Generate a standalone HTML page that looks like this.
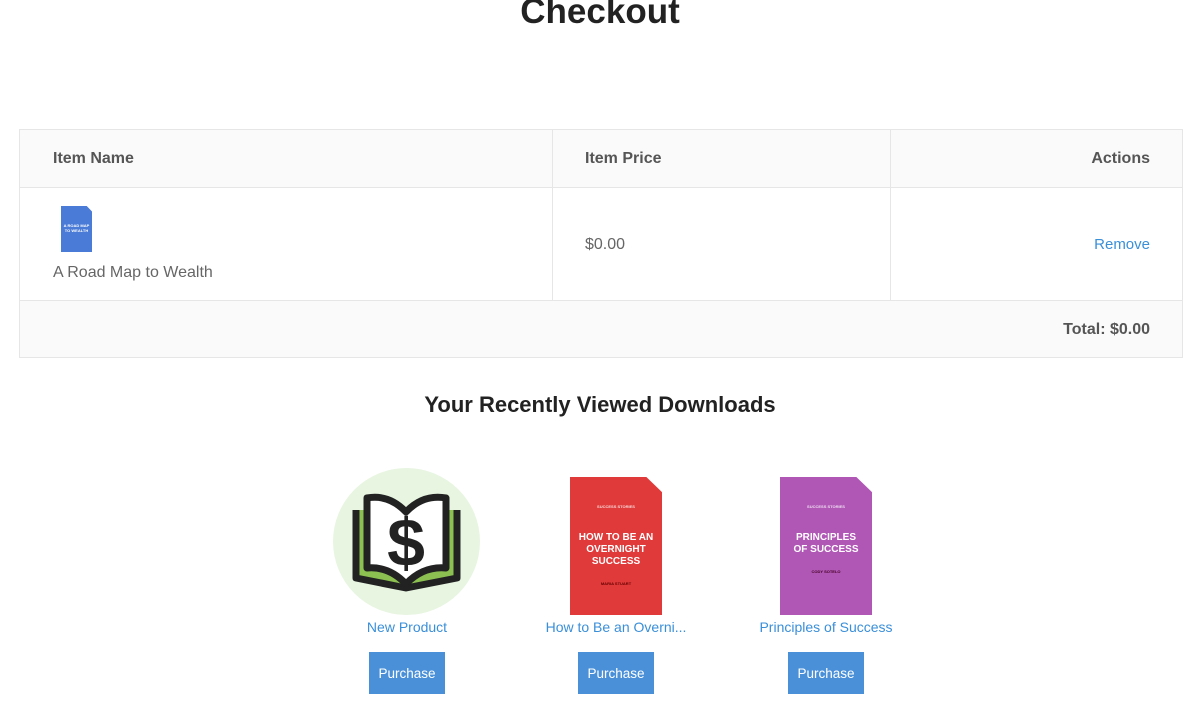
<!DOCTYPE html>
<html><head><style>
body{margin:0;width:1200px;height:705px;overflow:hidden;background:#fff;font-family:"Liberation Sans",sans-serif;position:relative}
.a{position:absolute}
h1{position:absolute;top:-13px;left:0;width:1200px;text-align:center;font-size:35px;font-weight:bold;color:#222;margin:0;line-height:50px}
.cell{position:absolute;box-sizing:border-box;border:1px solid #e6e6e6}
.th{font-weight:bold;color:#555;font-size:16px}
.td{color:#666;font-size:16px}
.lnk{color:#3a8fd9;font-size:14px;text-align:center}
.btn{background:#4a90d9;color:#fff;font-size:13.5px;text-align:center;line-height:43px;width:76px;height:42px}
.book{color:#fff;font-weight:bold;text-align:center;font-size:10px;line-height:12px}
</style></head><body>
<h1>Checkout</h1>
<div class="cell" style="left:19px;top:129px;width:534px;height:59px;background:#fafafa"></div>
<div class="cell" style="left:552px;top:129px;width:339px;height:59px;background:#fafafa"></div>
<div class="cell" style="left:890px;top:129px;width:293px;height:59px;background:#fafafa"></div>
<div class="cell" style="left:19px;top:187px;width:534px;height:114px"></div>
<div class="cell" style="left:552px;top:187px;width:339px;height:114px"></div>
<div class="cell" style="left:890px;top:187px;width:293px;height:114px"></div>
<div class="cell" style="left:19px;top:300px;width:1164px;height:58px;background:#fafafa"></div>
<div class="a th" style="left:53px;top:150px">Item Name</div>
<div class="a th" style="left:585px;top:150px">Item Price</div>
<div class="a th" style="right:50px;top:150px">Actions</div>
<div class="a" style="left:61px;top:206px;width:31px;height:46px;background:#4a7bd6;clip-path:polygon(0 0,83% 0,100% 12%,100% 100%,0 100%)"><div style="color:#fff;font-size:4px;font-weight:bold;text-align:center;margin-top:17px;line-height:5px">A ROAD MAP<br>TO WEALTH</div></div>
<div class="a td" style="left:53px;top:264px">A Road Map to Wealth</div>
<div class="a td" style="left:585px;top:236px">$0.00</div>
<div class="a" style="right:50px;top:236px;color:#3a8fd9;font-size:15px">Remove</div>
<div class="a th" style="right:50px;top:321px">Total: $0.00</div>
<div class="a" style="left:0;width:1200px;top:392px;text-align:center;font-size:22px;font-weight:bold;color:#222">Your Recently Viewed Downloads</div>

<div class="a" style="left:333px;top:468px;width:147px;height:147px;border-radius:50%;background:#e8f5e1"></div>
<svg class="a" style="left:333px;top:468px" width="147" height="147" viewBox="0 0 147 147">
<path d="M23 42 L23 110 L73 120 L124 110 L124 42" fill="#8cc152" stroke="#222" stroke-width="7" stroke-linejoin="round"/>
<path d="M34 30 L34 100 Q56 98 73 116 Q90 98 113 100 L113 30 Q90 26 73 44 Q56 26 34 30Z" fill="#fff" stroke="#222" stroke-width="7" stroke-linejoin="round"/>
<text x="73" y="98" text-anchor="middle" font-family="Liberation Sans" font-weight="bold" font-size="68" fill="#222">$</text>
</svg>
<div class="a book" style="left:570px;top:477px;width:92px;height:138px;background:#e03a3a;clip-path:polygon(0 0,83% 0,100% 11%,100% 100%,0 100%)"><div style="font-size:4px;margin-top:24px;opacity:.8">SUCCESS STORIES</div><div style="margin-top:19px">HOW TO BE AN<br>OVERNIGHT<br>SUCCESS</div><div style="font-size:4px;margin-top:10px;color:#600">MARIA STUART</div></div>
<div class="a book" style="left:780px;top:477px;width:92px;height:138px;background:#b057b6;clip-path:polygon(0 0,83% 0,100% 11%,100% 100%,0 100%)"><div style="font-size:4px;margin-top:24px;opacity:.8">SUCCESS STORIES</div><div style="margin-top:19px">PRINCIPLES<br>OF SUCCESS</div><div style="font-size:4px;margin-top:10px;color:#402">CODY SOTELO</div></div>

<div class="a lnk" style="left:307px;width:200px;top:619px">New Product</div>
<div class="a lnk" style="left:516px;width:200px;top:619px">How to Be an Overni...</div>
<div class="a lnk" style="left:726px;width:200px;top:619px">Principles of Success</div>
<div class="a btn" style="left:369px;top:652px">Purchase</div>
<div class="a btn" style="left:578px;top:652px">Purchase</div>
<div class="a btn" style="left:788px;top:652px">Purchase</div>
</body></html>
